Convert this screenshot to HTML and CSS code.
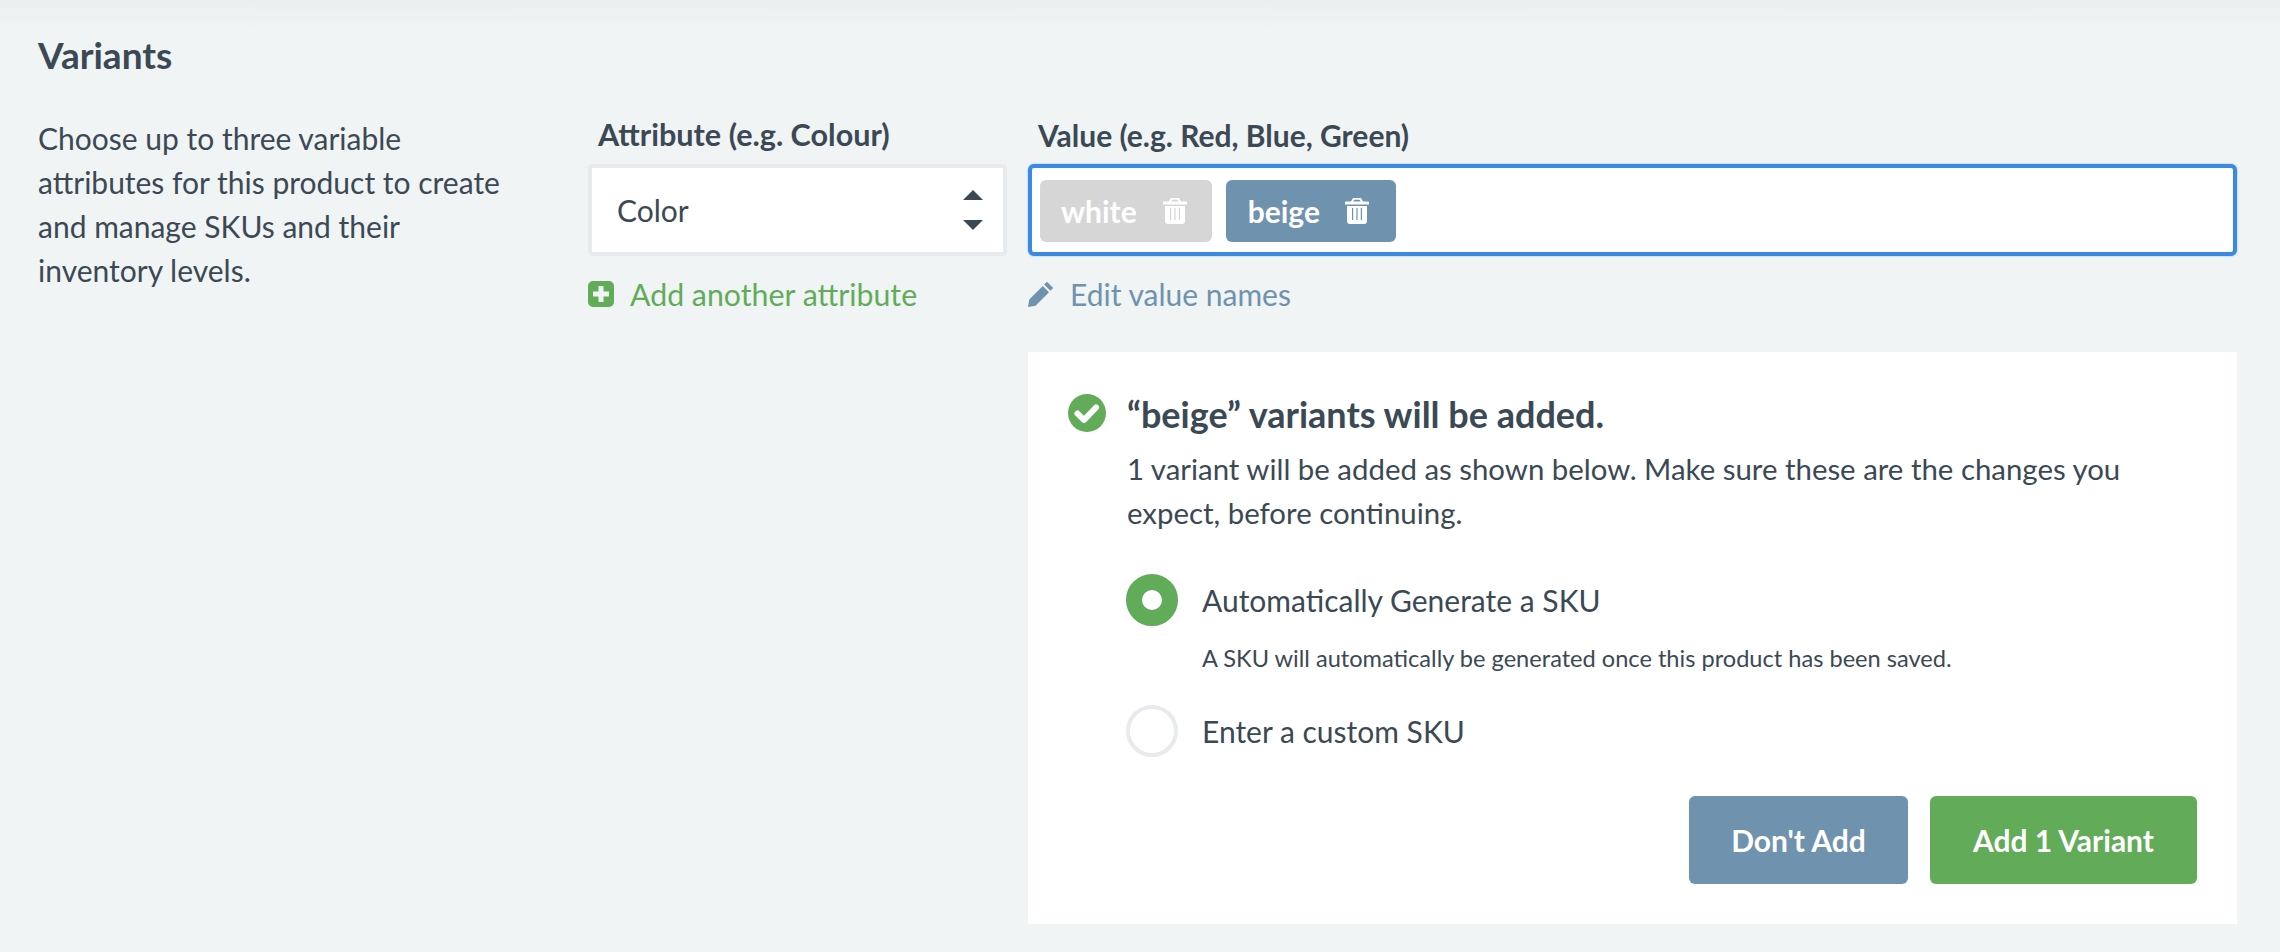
FILE: index.html
```html
<!DOCTYPE html>
<html lang="en">
<head>
  <meta charset="UTF-8">
  <title>Variants</title>
  <link rel="stylesheet" href="styles.css">
</head>
<body>

  <h1 class="page-title">Variants</h1>

  <div class="variants">
    <!-- left description -->
    <p class="intro">Choose up to three variable attributes for this product to create and manage SKUs and their inventory levels.</p>

    <!-- attribute column -->
    <div class="attr-col">
      <label class="field-label field-label-attr">Attribute (e.g. Colour)</label>
      <div class="select-box">
        <span>Color</span>
        <svg class="arrows" viewBox="0 0 20 40" width="20" height="40"><path d="M10 0 20 10H0Z"/><path d="M0 30H20L10 40Z"/></svg>
      </div>
      <a class="link link-green">
        <svg class="link-icon" viewBox="0 0 26 26" width="26" height="26"><path fill-rule="evenodd" d="M5 0H21A5 5 0 0 1 26 5V21A5 5 0 0 1 21 26H5A5 5 0 0 1 0 21V5A5 5 0 0 1 5 0ZM10.500 5V10.500H5V15.500H10.500V21H15.500V15.500H21V10.500H15.500V5Z"/></svg>
        Add another attribute
      </a>
    </div>

    <!-- value column -->
    <div class="value-col">
      <label class="field-label field-label-value">Value (e.g. Red, Blue, Green)</label>
      <div class="tag-input">
        <span class="tag tag-old">white <svg class="trash" viewBox="0 0 24 26" width="24" height="26"><path fill-rule="evenodd" d="M8 0H16L18 3.500H23A1 1 0 0 1 24 4.500V6.500H0V4.500A1 1 0 0 1 1 3.500H6ZM9.200 1.800 8.300 3.500H15.700L14.800 1.800ZM2 8H22V23A3 3 0 0 1 19 26H5A3 3 0 0 1 2 23ZM7 10V22H8.200V10ZM11.400 10V22H12.600V10ZM15.800 10V22H17V10Z"/></svg></span>
        <span class="tag tag-new">beige <svg class="trash" viewBox="0 0 24 26" width="24" height="26"><path fill-rule="evenodd" d="M8 0H16L18 3.500H23A1 1 0 0 1 24 4.500V6.500H0V4.500A1 1 0 0 1 1 3.500H6ZM9.200 1.800 8.300 3.500H15.700L14.800 1.800ZM2 8H22V23A3 3 0 0 1 19 26H5A3 3 0 0 1 2 23ZM7 10V22H8.200V10ZM11.400 10V22H12.600V10ZM15.800 10V22H17V10Z"/></svg></span>
      </div>
      <a class="link link-blue">
        <svg class="link-icon" viewBox="0 0 26 26" width="26" height="26"><path d="M19 0.800 25.200 7 22.400 9.800 16.200 3.600ZM14.800 5 21 11.200 7.500 24.700 0 26 1.300 18.500Z"/></svg>
        Edit value names
      </a>

      <div class="panel">
        <div class="notice">
          <svg class="check" viewBox="0 0 38 38" width="38" height="38"><circle cx="19" cy="19" r="19" fill="#62ac59"/><path d="M9.500 19.500 16 26 28 13.500" fill="none" stroke="#fff" stroke-width="6" stroke-linecap="round" stroke-linejoin="round"/></svg>
          <div>
            <h3 class="notice-title">“beige” variants will be added.</h3>
            <p class="notice-text">1 variant will be added as shown below. Make sure these are the changes you expect, before continuing.</p>
          </div>
        </div>

        <div class="sku-options">
          <div class="radio-row">
            <span class="radio radio-on"></span>
            <span>Automatically Generate a SKU</span>
          </div>
          <p class="radio-help">A SKU will automatically be generated once this product has been saved.</p>
          <div class="radio-row">
            <span class="radio"></span>
            <span>Enter a custom SKU</span>
          </div>
        </div>

        <div class="actions">
          <button class="btn btn-blue" type="button">Don't Add</button>
          <button class="btn btn-green" type="button">Add 1 Variant</button>
        </div>
      </div>
    </div>
  </div>

</body>
</html>
```

FILE: styles.css
```css
html, body {
  margin: 0;
  height: 100%;
}
body {
  font-family: 'Lato', sans-serif;
  font-size: 30px;
  line-height: 44px;
  color: #3b4955;
  background: linear-gradient(#ecefef, #f0f4f5 30px);
  padding: 31px 43px 0 38px;
  box-sizing: border-box;
  overflow: hidden;
}
.page-title {
  margin: 0;
  font-size: 37px;
  line-height: 48px;
  font-weight: 700;
}
.variants {
  display: grid;
  grid-template-columns: 529px 419px 1209px;
  column-gap: 21px;
  margin-top: 37px;
}
.intro {
  margin: 0;
  width: 490px;
}
.field-label {
  display: block;
  font-weight: 700;
  line-height: 44px;
  margin: -3px 0 0 10px;
}
.field-label-attr {
  font-size: 30.6px;
}
.select-box {
  display: flex;
  align-items: center;
  justify-content: space-between;
  height: 84px;
  margin-top: 7px;
  padding: 0 20px 0 25px;
  background: #fff;
  border: 4px solid #e8ebed;
  border-radius: 4px;
}
.arrows {
  fill: #3b4955;
}
.link {
  display: flex;
  align-items: center;
  gap: 16px;
  margin-top: 16px;
  font-size: 30.3px;
}
.link-icon {
  fill: currentColor;
}
.link-green {
  color: #62ac59;
}
.link-blue {
  color: #6f92ae;
  font-size: 30px;
}
.tag-input {
  display: flex;
  align-items: center;
  gap: 14px;
  height: 82px;
  margin-top: 7px;
  padding: 2px 8px 0;
  background: #fff;
  border: 4px solid #3a8ae0;
  border-radius: 6px;
  box-shadow: 0 0 2px rgba(58, 138, 224, 0.6);
}
.tag {
  display: flex;
  align-items: center;
  justify-content: space-between;
  height: 62px;
  padding: 0 25px 0 21px;
  gap: 26px;
  border-radius: 6px;
  color: #fff;
  font-weight: 700;
}
.tag-old {
  background: #d6d6d6;
}
.tag-new {
  padding: 0 27px 0 22px;
  gap: 25px;
  background: #6f92ae;
}
.trash {
  fill: #fff;
}
.panel {
  margin-top: 36px;
  height: 572px;
  box-sizing: border-box;
  padding: 39px 40px 0;
  background: #fff;
}
.notice {
  display: flex;
  gap: 21px;
}
.check {
  margin-top: 3px;
  flex: none;
}
.notice-title {
  margin: 0 0 10px;
  font-size: 36px;
  line-height: 46px;
  font-weight: 700;
}
.notice-text {
  margin: 0;
  font-size: 29.4px;
}
.sku-options {
  margin: 39px 0 0 58px;
}
.radio-row {
  display: flex;
  align-items: center;
  gap: 24px;
}
.radio {
  width: 52px;
  height: 52px;
  box-sizing: border-box;
  border: 4px solid #e8ebed;
  border-radius: 50%;
  flex: none;
}
.radio-on {
  border: 16px solid #62ac59;
}
.radio-help {
  margin: 14px 0 29px 76px;
  font-size: 23.6px;
  line-height: 36px;
}
.actions {
  display: flex;
  justify-content: flex-end;
  gap: 22px;
  margin-top: 39px;
}
.btn {
  height: 88px;
  border: none;
  border-radius: 6px;
  color: #fff;
  font-family: inherit;
  font-size: 30px;
  font-weight: 700;
  cursor: pointer;
}
.btn-blue {
  padding: 0 42px;
  background: #6f92ae;
}
.btn-green {
  padding: 0 43px;
  background: #62ac59;
}
```
